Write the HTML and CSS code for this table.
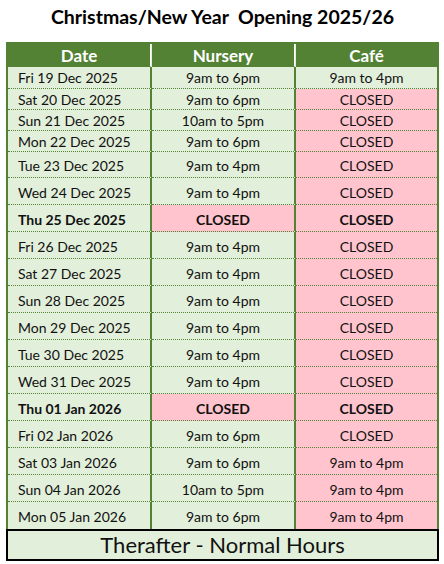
FILE: index.html
```html
<!DOCTYPE html>
<html lang="en">
<head>
<meta charset="utf-8">
<title>Christmas/New Year Opening 2025/26</title>
<link rel="stylesheet" href="styles.css">
</head>
<body>
<div class="page">
  <h1 class="title">Christmas/New Year&nbsp; Opening 2025/26</h1>
  <div class="sheet">
    <div class="grid">
      <div class="cell head">Date</div><div class="cell head">Nursery</div><div class="cell head last">Café</div>

      <div class="cell date r22">Fri 19 Dec 2025</div><div class="cell r22">9am to 6pm</div><div class="cell last r22">9am to 4pm</div>
      <div class="cell date r21">Sat 20 Dec 2025</div><div class="cell r21">9am to 6pm</div><div class="cell last r21 closed">CLOSED</div>
      <div class="cell date r21">Sun 21 Dec 2025</div><div class="cell r21">10am to 5pm</div><div class="cell last r21 closed">CLOSED</div>
      <div class="cell date r21">Mon 22 Dec 2025</div><div class="cell r21">9am to 6pm</div><div class="cell last r21 closed">CLOSED</div>
      <div class="cell date r26">Tue 23 Dec 2025</div><div class="cell r26">9am to 4pm</div><div class="cell last r26 closed">CLOSED</div>
      <div class="cell date">Wed 24 Dec 2025</div><div class="cell">9am to 4pm</div><div class="cell last closed">CLOSED</div>
      <div class="cell date bold">Thu 25 Dec 2025</div><div class="cell closed bold">CLOSED</div><div class="cell last closed bold">CLOSED</div>
      <div class="cell date">Fri 26 Dec 2025</div><div class="cell">9am to 4pm</div><div class="cell last closed">CLOSED</div>
      <div class="cell date">Sat 27 Dec 2025</div><div class="cell">9am to 4pm</div><div class="cell last closed">CLOSED</div>
      <div class="cell date">Sun 28 Dec 2025</div><div class="cell">9am to 4pm</div><div class="cell last closed">CLOSED</div>
      <div class="cell date">Mon 29 Dec 2025</div><div class="cell">9am to 4pm</div><div class="cell last closed">CLOSED</div>
      <div class="cell date">Tue 30 Dec 2025</div><div class="cell">9am to 4pm</div><div class="cell last closed">CLOSED</div>
      <div class="cell date">Wed 31 Dec 2025</div><div class="cell">9am to 4pm</div><div class="cell last closed">CLOSED</div>
      <div class="cell date bold">Thu 01 Jan 2026</div><div class="cell closed bold">CLOSED</div><div class="cell last closed bold">CLOSED</div>
      <div class="cell date">Fri 02 Jan 2026</div><div class="cell">9am to 6pm</div><div class="cell last closed">CLOSED</div>
      <div class="cell date">Sat 03 Jan 2026</div><div class="cell">9am to 6pm</div><div class="cell last closed">9am to 4pm</div>
      <div class="cell date">Sun 04 Jan 2026</div><div class="cell">10am to 5pm</div><div class="cell last closed">9am to 4pm</div>
      <div class="cell date end">Mon 05 Jan 2026</div><div class="cell end">9am to 6pm</div><div class="cell last closed end">9am to 4pm</div>
    </div>
    <div class="footer">Therafter - Normal Hours</div>
  </div>
</div>
</body>
</html>
```
FILE: styles.css
```css
* { box-sizing: border-box; }
html, body { margin: 0; padding: 0; background: #ffffff; }
body {
  font-family: Lato, "Liberation Sans", sans-serif;
  color: #111111;
}
.page {
  width: 444px;
  padding: 0 5px 0 6px;
}
.title {
  margin: 0;
  height: 42px;
  padding-top: 4px;
  font-size: 19.5px;
  font-weight: 700;
  text-align: center;
  line-height: 26px;
  color: #000000;
}
.sheet { width: 433px; }
.grid {
  display: grid;
  grid-template-columns: 144px 144px 141px;
  border: 2px solid #548235;
  border-bottom: 0;
  background: #e2efda;
}
.cell {
  height: 27px;
  display: flex;
  align-items: center;
  justify-content: center;
  padding-top: 2px;
  font-size: 14px;
  border-right: 2px solid #548235;
  border-bottom: 1px dotted #548235;
  white-space: nowrap;
}
.cell.last { border-right: 0; }
.cell.end { border-bottom: 0; }
.head {
  height: 23px;
  padding-top: 0;
  background: #548235;
  color: #ffffff;
  font-weight: 700;
  font-size: 17px;
  border-right: 1px solid #ffffff;
  margin-right: 1px;
}
.head.last { margin-right: 0; }
.date { justify-content: flex-start; padding-left: 10px; }
.r21 { height: 21px; padding-top: 0; }
.r22 { height: 22px; padding-top: 0; }
.r26 { height: 26px; padding-top: 1px; }
.closed { background: #ffc4cd; }
.bold { font-weight: 700; }
.footer {
  height: 32px;
  border: 2px solid #000000;
  background: #e2efda;
  text-align: center;
  font-size: 22px;
  line-height: 28px;
}
```
